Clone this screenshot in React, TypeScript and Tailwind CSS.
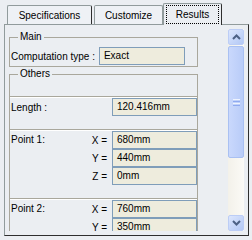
import type { ReactNode } from 'react'

type Coord = [string, string]

// only the rows that show above the fold
const points: { name: string; coords: Coord[] }[] = [
  { name: 'Point 1:', coords: [['X', '680mm'], ['Y', '440mm'], ['Z', '0mm']] },
  { name: 'Point 2:', coords: [['X', '760mm'], ['Y', '350mm']] },
]

function Tab({ label, width, selected, last }: { label: string; width: string; selected?: boolean; last?: boolean }) {
  if (selected) {
    return (
      <div className={`${width} relative -mb-px flex h-[22px] flex-col rounded-t-[2px] border-l border-t border-r border-l-[#919b9c] border-t-[#919b9c] border-r-[#2e2e2e] bg-[#ebeef2] px-[2px] pt-px`}>
        <div className="flex h-[19px] items-center justify-center border border-dotted border-black">{label}</div>
      </div>
    )
  }
  return (
    <div
      className={`${width} flex h-[19px] items-center justify-center rounded-t-[2px] border-l border-t border-r border-l-[#919b9c] border-t-[#919b9c] bg-[#eef1f5] ${
        last ? 'border-r-[#919b9c]' : 'border-r-[#2e2e2e]'
      }`}
    >
      {label}
    </div>
  )
}

function Field({ value, width = 'w-[85px]' }: { value: string; width?: string }) {
  return (
    <div className={`${width} flex h-[18px] shrink-0 items-center border border-[#7f9db9] bg-[#eeecdd] pl-[4px] leading-none`}>
      {value}
    </div>
  )
}

function Section({ children }: { children: ReactNode }) {
  return <div className="border-t border-[#a9a79c] pb-[13px] pt-px shadow-[inset_0_1px_0_#ffffff]">{children}</div>
}

function Chevron({ up }: { up?: boolean }) {
  return (
    <svg width="9" height="6" viewBox="0 0 9 6" className={up ? '' : 'rotate-180'}>
      <path d="M1 5 L4.5 1.5 L8 5" fill="none" stroke="#4d6185" strokeWidth="2" />
    </svg>
  )
}

function ScrollButton({ up }: { up?: boolean }) {
  return (
    <div className="flex h-[16px] w-[16px] items-center justify-center rounded-[2px] border border-[#bccdf6] bg-gradient-to-br from-[#dce6fd] to-[#b3c8f5]">
      <Chevron up={up} />
    </div>
  )
}

export default function App() {
  return (
    <div className="h-[240px] w-[252px] overflow-hidden bg-[#ebeef2] font-['Liberation_Sans',Arial,sans-serif] text-[10px] text-black">
      <div className="relative z-10 flex h-[24px] items-end pl-[7px]">
        <Tab label="Specifications" width="w-[85px]" />
        <div className="w-[2px]" />
        <Tab label="Customize" width="w-[69px]" last />
        <Tab label="Results" width="w-[59px]" selected />
      </div>

      <div className="ml-[4px] flex h-[212px] w-[245px] border-b border-l border-r border-t border-b-[#2e2e2e] border-l-[#919b9c] border-r-[#2e2e2e] border-t-[#919b9c] bg-[#ebeef2] p-[4px]">
        <div className="h-[202px] flex-1 overflow-hidden">
          <div className="w-[189px]">
            <fieldset className="mt-[2px] border border-[#a9a79c] pb-px">
              <legend className="ml-[8px] px-[2px] leading-[12px]">Main</legend>
              <div className="flex items-center gap-[4px] pt-[4px]">
                <span className="pl-px">Computation type :</span>
                <Field value="Exact" width="w-[86px]" />
              </div>
            </fieldset>

            <fieldset className="mt-px border border-b-0 border-[#a9a79c]">
              <legend className="ml-[8px] px-[2px] leading-[12px]">Others</legend>
              <div className="h-[16px]" />
              <Section>
                <div className="flex items-center justify-between">
                  <span className="pl-px">Length :</span>
                  <Field value="120.416mm" />
                </div>
              </Section>
              {points.map((p) => (
                <Section key={p.name}>
                  <div className="flex">
                    <div className="w-[80px] pl-px leading-[18px]">{p.name}</div>
                    <div className="flex flex-col">
                      {p.coords.map(([k, v]) => (
                        <div key={k} className="flex items-center">
                          <span className="w-[22px] pr-[5px] text-right">{k} =</span>
                          <Field value={v} />
                        </div>
                      ))}
                    </div>
                  </div>
                </Section>
              ))}
            </fieldset>
          </div>
        </div>

        <div className="flex h-[202px] w-[16px] flex-col bg-gradient-to-r from-[#f3f1ea] to-[#fbfaf6]">
          <ScrollButton up />
          <div className="mt-px flex h-[112px] items-center justify-center rounded-[2px] border border-[#a9c0f2] bg-gradient-to-r from-[#c9d8fc] to-[#b9ccf8]">
            <div className="flex flex-col gap-px">
              <div className="h-px w-[7px] bg-[#eef3fe]" />
              <div className="h-px w-[7px] bg-[#8faaf0]" />
              <div className="h-px w-[7px] bg-[#eef3fe]" />
              <div className="h-px w-[7px] bg-[#8faaf0]" />
            </div>
          </div>
          <div className="flex-1" />
          <ScrollButton />
        </div>
      </div>
    </div>
  )
}
